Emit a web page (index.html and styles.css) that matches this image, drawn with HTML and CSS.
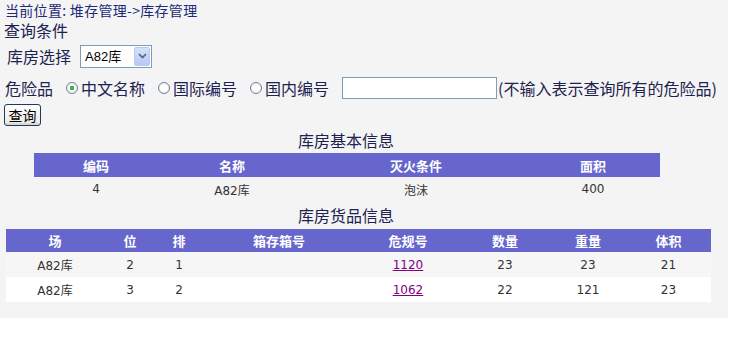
FILE: index.html
```html
<!DOCTYPE html>
<html lang="zh-CN">
<head>
    <meta charset="UTF-8">
    <title>库存管理</title>
    <link rel="stylesheet" href="styles.css">
</head>
<body>
<div class="page">
    <div class="crumb">当前位置: 堆存管理-&gt;库存管理</div>
    <div class="section">查询条件</div>

    <!-- 库房选择 -->
    <div class="row row-store">
        <span class="label">库房选择</span>
        <span class="select-box">
            <select name="store">
                <option>A82库</option>
            </select>
            <span class="select-arrow">
                <svg width="9" height="6" viewBox="0 0 9 6"><path d="M1 1 L4.5 4.5 L8 1" fill="none" stroke="#4d6185" stroke-width="1.6"/></svg>
            </span>
        </span>
    </div>

    <!-- 危险品 -->
    <div class="row row-danger">
        <span class="label">危险品</span>
        <label class="radio"><input type="radio" name="kind" checked>中文名称</label>
        <label class="radio"><input type="radio" name="kind">国际编号</label>
        <label class="radio"><input type="radio" name="kind">国内编号</label>
        <input type="text" class="keyword">
        <span class="hint">(不输入表示查询所有的危险品)</span>
    </div>

    <button type="button" class="btn">查询</button>

    <div class="title title-first">库房基本信息</div>
    <table class="grid grid-base">
        <colgroup>
            <col style="width:124px"><col style="width:148px"><col style="width:220px"><col style="width:134px">
        </colgroup>
        <tr><th>编码</th><th>名称</th><th>灭火条件</th><th>面积</th></tr>
        <tr><td>4</td><td>A82库</td><td>泡沫</td><td>400</td></tr>
    </table>

    <div class="title title-second">库房货品信息</div>
    <table class="grid grid-goods">
        <colgroup>
            <col style="width:98px"><col style="width:52px"><col style="width:46px"><col style="width:154px">
            <col style="width:104px"><col style="width:90px"><col style="width:76px"><col style="width:85px">
        </colgroup>
        <tr><th>场</th><th>位</th><th>排</th><th>箱存箱号</th><th>危规号</th><th>数量</th><th>重量</th><th>体积</th></tr>
        <tr class="odd"><td>A82库</td><td>2</td><td>1</td><td></td><td><a href="#">1120</a></td><td>23</td><td>23</td><td>21</td></tr>
        <tr class="even"><td>A82库</td><td>3</td><td>2</td><td></td><td><a href="#">1062</a></td><td>22</td><td>121</td><td>23</td></tr>
    </table>
</div>
</body>
</html>
```

FILE: styles.css
```css
body {
    margin: 0;
    background: #fff;
    font-family: "Noto Sans CJK SC", "DejaVu Sans", sans-serif;
    color: #1c2350;
}

.page {
    width: 728px;
    height: 318px;
    box-sizing: border-box;
    background: #f4f4f4;
    padding: 0 0 0 4px;
}

.crumb {
    height: 20px;
    line-height: 20px;
    font-size: 14px;
    letter-spacing: 0.3px;
    padding-left: 1px;
    color: #1c2a78;
}

.section {
    height: 20px;
    line-height: 20px;
    font-size: 16px;
}

.row {
    display: flex;
    align-items: center;
    font-size: 16px;
}

.row-store {
    height: 30px;
    margin-top: 1px;
    padding-left: 3px;
}

.row-store .label {
    margin-right: 9px;
}

.select-box {
    display: inline-flex;
    align-items: center;
    width: 72px;
    height: 23px;
    box-sizing: border-box;
    border: 1px solid #7f9db9;
    background: #fff;
    padding: 1px;
}

.select-box select {
    appearance: none;
    border: none;
    outline: none;
    background: #fff;
    font-family: "Liberation Sans", "Noto Sans CJK SC", sans-serif;
    font-size: 13px;
    color: #000;
    width: 54px;
    padding: 0 0 0 3px;
}

.select-arrow {
    display: flex;
    align-items: center;
    justify-content: center;
    width: 16px;
    height: 19px;
    box-sizing: border-box;
    border: 1px solid #b8c9f0;
    border-radius: 2px;
    background: linear-gradient(#d6e2fb, #b6c8f4);
}

.row-danger {
    height: 30px;
    margin-top: 2px;
    padding-left: 1px;
}

.row-danger .label {
    margin-right: 13px;
}

.radio {
    display: inline-flex;
    align-items: center;
    margin-right: 13px;
}

.radio input {
    appearance: none;
    width: 12px;
    height: 12px;
    margin: 0 3px 0 0;
    border: 1px solid #6f7f98;
    border-radius: 50%;
    background: radial-gradient(circle, #fff 40%, #e4e4dc 100%);
    box-sizing: border-box;
}

.radio input:checked {
    background: radial-gradient(circle, #3fae3f 0, #3fae3f 2px, #fff 2.5px, #e4e4dc 100%);
}

.keyword {
    width: 155px;
    height: 22px;
    box-sizing: border-box;
    border: 1px solid #7f9db9;
    background: #fff;
    margin: 0;
    padding: 0 2px;
}

.hint {
    margin-left: 1px;
}

.btn {
    display: block;
    margin: 1px 0 0 0;
    width: 37px;
    height: 22px;
    padding: 0;
    font-family: "Noto Sans CJK SC", sans-serif;
    font-size: 14px;
    line-height: 18px;
    color: #000;
    background: linear-gradient(#fff, #ecebe6 85%, #d6d0c5);
    border: 1px solid #1c3a6e;
    border-radius: 3px;
}

.title {
    height: 25px;
    line-height: 25px;
    text-align: center;
    font-size: 16px;
    color: #1c2350;
    margin-right: 40px;
}

.title-first {
    margin-top: 2px;
}

.title-second {
    margin-top: 2px;
}

.grid {
    border-collapse: collapse;
    table-layout: fixed;
    font-size: 13px;
    color: #333;
}

.grid th {
    background: #6666cc;
    color: #fff;
    font-weight: bold;
    height: 24px;
    padding: 0;
    text-align: center;
}

.grid td {
    height: 24px;
    padding: 0;
    text-align: center;
    font-family: "DejaVu Sans", "Noto Sans CJK SC", sans-serif;
    font-size: 12px;
}

.grid-base {
    width: 626px;
    margin-left: 30px;
}

.grid-goods {
    width: 705px;
    margin-left: 2px;
    margin-top: 1px;
}

.grid-goods th {
    height: 23px;
}

.grid-goods td {
    height: 25px;
}

.grid-goods .odd td {
    background: #f6f6f6;
}

.grid-goods .even td {
    background: #fff;
}

.grid a {
    color: #800080;
    text-decoration: underline;
}
```
